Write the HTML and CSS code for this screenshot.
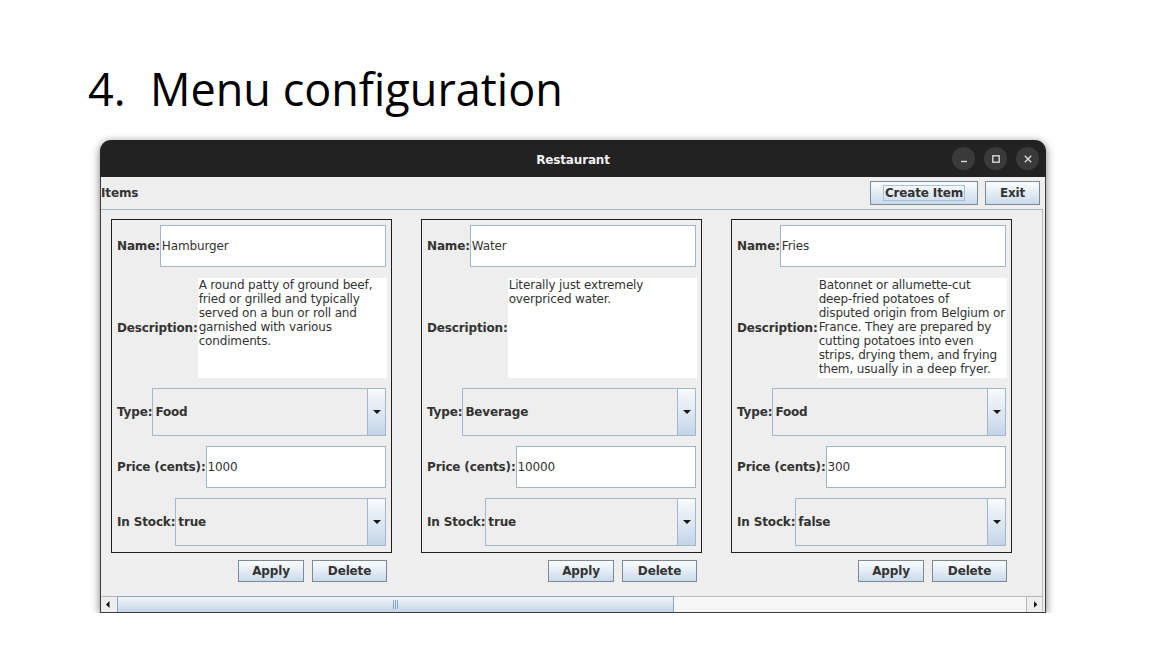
FILE: index.html
```html
<!DOCTYPE html>
<html>
<head>
<meta charset="utf-8">
<link rel="stylesheet" href="styles.css">
</head>
<body>
<h1 class="heading"><span class="num">4.</span><span>Menu configuration</span></h1>

<div class="window">
  <div class="titlebar">
    <div></div>
    <div class="title">Restaurant</div>
    <div class="controls">
      <span class="ctl"><svg width="10" height="10" viewBox="0 0 10 10"><path d="M2 7.5h6" stroke="#d8d8d8" stroke-width="1.4"/></svg></span>
      <span class="ctl"><svg width="10" height="10" viewBox="0 0 10 10"><rect x="1.8" y="1.8" width="6.4" height="6.4" fill="none" stroke="#d8d8d8" stroke-width="1.4"/></svg></span>
      <span class="ctl"><svg width="10" height="10" viewBox="0 0 10 10"><path d="M1.8 1.8l6.4 6.4M8.2 1.8l-6.4 6.4" stroke="#d8d8d8" stroke-width="1.4"/></svg></span>
    </div>
  </div>
  <div class="win-body">
    <div class="toolbar">
      <span class="lbl">Items</span>
      <div class="tb-buttons">
        <button class="jbtn create"><span class="focus">Create Item</span></button>
        <button class="jbtn exit">Exit</button>
      </div>
    </div>
    <div class="scrollpane">
      <div class="viewport">
        <div class="item">
          <div class="card">
            <div class="row r-name"><span class="lbl">Name:</span><div class="field">Hamburger</div></div>
            <div class="row r-desc"><span class="lbl">Description:</span><div class="area">A round patty of ground beef,<br>fried or grilled and typically<br>served on a bun or roll and<br>garnished with various<br>condiments.</div></div>
            <div class="row r-combo"><span class="lbl">Type:</span><div class="combo"><span class="val">Food</span><span class="arrow"></span></div></div>
            <div class="row r-name"><span class="lbl">Price (cents):</span><div class="field">1000</div></div>
            <div class="row r-combo"><span class="lbl">In Stock:</span><div class="combo"><span class="val">true</span><span class="arrow"></span></div></div>
          </div>
          <div class="actions"><button class="jbtn apply">Apply</button><button class="jbtn del">Delete</button></div>
        </div>
        <div class="item">
          <div class="card">
            <div class="row r-name"><span class="lbl">Name:</span><div class="field">Water</div></div>
            <div class="row r-desc"><span class="lbl">Description:</span><div class="area">Literally just extremely<br>overpriced water.</div></div>
            <div class="row r-combo"><span class="lbl">Type:</span><div class="combo"><span class="val">Beverage</span><span class="arrow"></span></div></div>
            <div class="row r-name"><span class="lbl">Price (cents):</span><div class="field">10000</div></div>
            <div class="row r-combo"><span class="lbl">In Stock:</span><div class="combo"><span class="val">true</span><span class="arrow"></span></div></div>
          </div>
          <div class="actions"><button class="jbtn apply">Apply</button><button class="jbtn del">Delete</button></div>
        </div>
        <div class="item">
          <div class="card">
            <div class="row r-name"><span class="lbl">Name:</span><div class="field">Fries</div></div>
            <div class="row r-desc"><span class="lbl">Description:</span><div class="area">Batonnet or allumette-cut<br>deep-fried potatoes of<br>disputed origin from Belgium or<br>France. They are prepared by<br>cutting potatoes into even<br>strips, drying them, and frying<br>them, usually in a deep fryer.</div></div>
            <div class="row r-combo"><span class="lbl">Type:</span><div class="combo"><span class="val">Food</span><span class="arrow"></span></div></div>
            <div class="row r-name"><span class="lbl">Price (cents):</span><div class="field">300</div></div>
            <div class="row r-combo"><span class="lbl">In Stock:</span><div class="combo"><span class="val">false</span><span class="arrow"></span></div></div>
          </div>
          <div class="actions"><button class="jbtn apply">Apply</button><button class="jbtn del">Delete</button></div>
        </div>
      </div>
      <div class="hscroll">
        <span class="sbtn"><svg width="16" height="15" viewBox="0 0 16 15"><path d="M5 7.5l3.5-3.5v7z" fill="#111"/></svg></span>
        <div class="track"><div class="thumb"><span class="grip"></span></div></div>
        <span class="sbtn right"><svg width="16" height="15" viewBox="0 0 16 15"><path d="M11 7.5l-3.5-3.5v7z" fill="#111"/></svg></span>
      </div>
    </div>
  </div>
</div>
</body>
</html>
```
FILE: styles.css
```css
html, body {
  margin: 0;
  padding: 0;
  background: #ffffff;
}
body {
  font-family: "DejaVu Sans", sans-serif;
  font-size: 12px;
  letter-spacing: -0.15px;
  color: #333333;
}
.heading {
  margin: 0;
  padding: 61px 0 0 88px;
  font-family: "Open Sans", "Noto Sans", sans-serif;
  font-weight: 400;
  font-size: 45px;
  letter-spacing: 0;
  line-height: 56px;
  color: #000;
  height: 79px;
  display: flex;
}
.heading .num {
  width: 62px;
}
.window {
  margin-left: 100px;
  width: 946px;
  border-radius: 11px 11px 0 0;
  box-shadow: 0 2px 9px rgba(0,0,0,0.55);
  background: #eeeeee;
}
.titlebar {
  height: 37px;
  background: #222222;
  border-radius: 11px 11px 0 0;
  display: grid;
  grid-template-columns: 1fr auto 1fr;
  align-items: center;
}
.title {
  font-family: "DejaVu Sans", sans-serif;
  font-weight: bold;
  font-size: 12px;
  color: #f2f2f2;
  padding-top: 2px;
}
.controls {
  justify-self: end;
  display: flex;
  gap: 9px;
  padding-right: 7px;
}
.ctl {
  width: 23px;
  height: 23px;
  border-radius: 50%;
  background: #3a3a3a;
  display: flex;
  align-items: center;
  justify-content: center;
}
.win-body {
  border: 1px solid #3c3c3c;
  border-top: none;
}
.lbl {
  font-weight: bold;
  color: #333333;
  white-space: nowrap;
}
.toolbar {
  height: 32px;
  display: flex;
  align-items: center;
  justify-content: space-between;
}
.tb-buttons {
  display: flex;
  gap: 7px;
  padding-right: 5px;
}
.jbtn {
  font-family: "DejaVu Sans", sans-serif;
  font-weight: bold;
  font-size: 12px;
  letter-spacing: -0.15px;
  color: #333333;
  border: 1px solid #7a8a99;
  background: linear-gradient(#fdfdfe 0%, #e6eef6 45%, #c9daea 100%);
  height: 24px;
  padding: 0;
  margin: 0;
  border-radius: 0;
  display: flex;
  align-items: center;
  justify-content: center;
}
.create { width: 108px; }
.exit { width: 55px; }
.focus {
  border: 1px solid #a9bfd8;
  padding: 0 1px;
  line-height: 14px;
}
.scrollpane {
  border-top: 1px solid #a8b6c4;
  border-right: 1px solid #b8c0c8;
  margin-right: 2px;
}
.viewport {
  height: 386px;
  display: flex;
  gap: 29px;
  padding: 9px 0 0 10px;
  box-sizing: border-box;
  overflow: hidden;
}
.item {
  width: 281px;
  flex: none;
}
.card {
  border: 1px solid #1e1e1e;
  padding: 5px 5px 6px 5px;
  display: flex;
  flex-direction: column;
  gap: 10px;
}
.row {
  display: flex;
  align-items: center;
}
.r-name { height: 42px; }
.card .r-name:first-child { margin-bottom: 1px; }
.r-desc { height: 100px; }
.r-combo { height: 48px; }
.field {
  flex: 1;
  height: 100%;
  box-sizing: border-box;
  background: #ffffff;
  border: 1px solid #a3b4c7;
  display: flex;
  align-items: center;
  padding-left: 1px;
  color: #333333;
}
.area {
  flex: 1;
  height: 100%;
  box-sizing: border-box;
  background: #ffffff;
  padding: 0 0 0 1px;
  line-height: 14px;
  white-space: nowrap;
  overflow: hidden;
  margin-right: -1px;
}
.combo {
  flex: 1;
  height: 100%;
  box-sizing: border-box;
  border: 1px solid #a3b6cb;
  background: #eeeeee;
  display: flex;
  align-items: stretch;
}
.combo .val {
  flex: 1;
  font-weight: bold;
  display: flex;
  align-items: center;
  padding-left: 2px;
}
.combo .arrow {
  width: 17px;
  border-left: 1px solid #a3b6cb;
  background: linear-gradient(#f8fafd 0%, #dfe8f2 50%, #c3d5e8 100%);
  display: flex;
  align-items: center;
  justify-content: center;
}
.combo .arrow::after {
  content: "";
  width: 0;
  height: 0;
  border-left: 4px solid transparent;
  border-right: 4px solid transparent;
  border-top: 4px solid #1a1a1a;
}
.actions {
  display: flex;
  justify-content: flex-end;
  gap: 8px;
  padding-right: 5px;
  margin-top: 7px;
}
.actions .jbtn { height: 22px; }
.apply { width: 66px; }
.del { width: 75px; }
.hscroll {
  height: 16px;
  display: flex;
  background: #eeeeee;
}
.sbtn {
  width: 16px;
  height: 16px;
  box-sizing: border-box;
  border-top: 1px solid #b0b8c0;
  background: #eeeeee;
  display: flex;
  align-items: center;
  justify-content: center;
}
.sbtn.right { border-left: 1px solid #b0b8c0; }
.track {
  flex: 1;
  border-top: 1px solid #b8c0c8;
  background: #f6f6f6;
  display: flex;
}
.thumb {
  width: 557px;
  box-sizing: border-box;
  margin-top: -1px;
  border: 1px solid #88a4cc;
  border-bottom: none;
  background: linear-gradient(#f4f7fb 0%, #dbe6f2 50%, #c4d5e8 100%);
  display: flex;
  align-items: center;
  justify-content: center;
}
.grip {
  width: 5px;
  height: 9px;
  background: repeating-linear-gradient(90deg, #8aa4c8 0 1px, transparent 1px 2px);
}
```
